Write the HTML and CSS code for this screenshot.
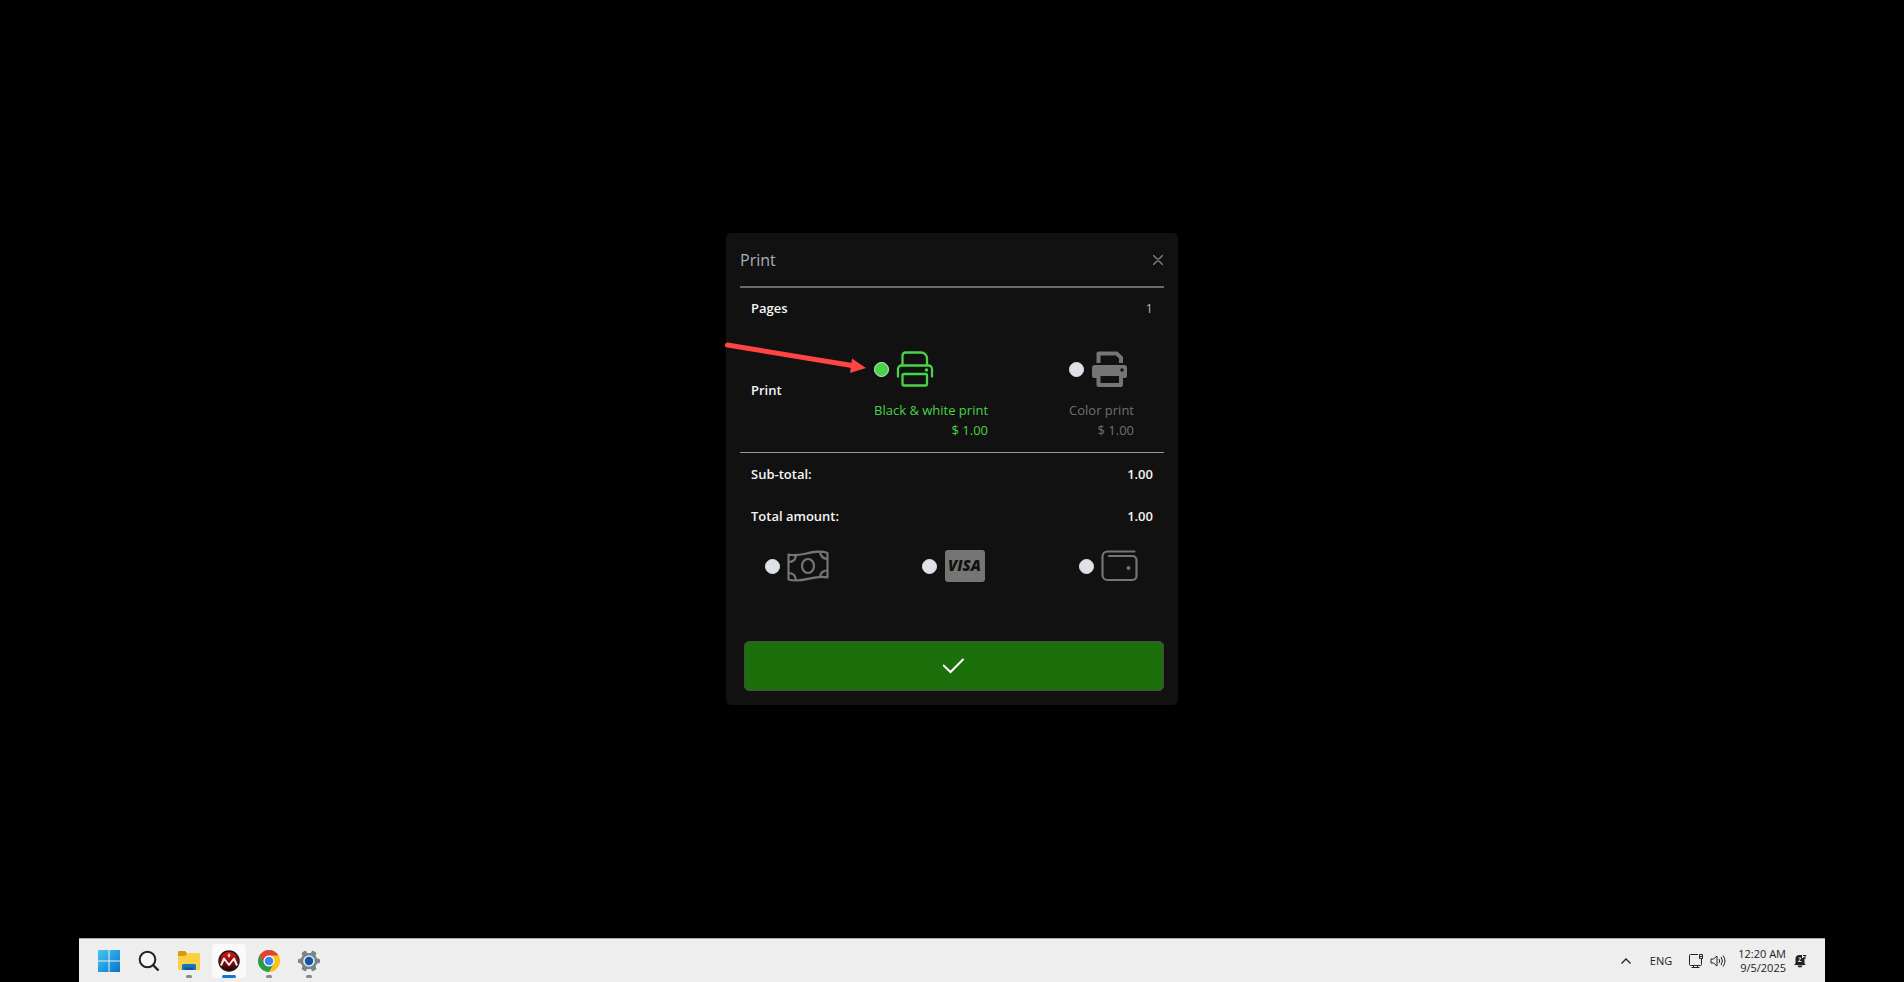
FILE: index.html
```html
<!DOCTYPE html>
<html lang="en">
<head>
    <meta charset="UTF-8">
    <meta name="viewport" content="width=device-width, initial-scale=1.0">
    <title>Print</title>
    <link rel="stylesheet" href="styles.css">
</head>
<body>
    <main class="desktop">
        <form class="dialog">
            <div class="dialog-header">
                <h1>Print</h1>
                <button type="button" class="close" aria-label="Close">
                    <svg width="10" height="10" viewBox="0 0 10 10" fill="none" stroke="currentColor" stroke-width="1.300"><path d="M0 0L3.500 3.500Q5 4.700 6.500 3.500L10 0M0 10L3.500 6.500Q5 5.300 6.500 6.500L10 10"/></svg>
                </button>
            </div>

            <div class="row pages-row">
                <span class="label">Pages</span>
                <span class="muted">1</span>
            </div>
            <div class="row print-row">
                <span class="label">Print</span>
                <div class="print-options">
                    <label class="print-option selected">
                        <span class="choice">
                            <input type="radio" name="mode" value="bw" checked>
                            <svg width="38" height="38" viewBox="0 0 38 38" fill="none" stroke="currentColor" stroke-width="2.300" stroke-linecap="round" stroke-linejoin="round">
                                <path d="M6.500 15V5.500a3 3 0 0 1 3-3h15.500a6 6 0 0 1 6 6V15"/>
                                <path d="M2 26.500V19a3.500 3.500 0 0 1 3.500-3.500h27a3.500 3.500 0 0 1 3.500 3.500v7.500"/>
                                <rect x="6.500" y="24" width="24.500" height="11.500" rx="1.500"/>
                                <circle cx="30.500" cy="20" r="1.800" fill="currentColor" stroke="none"/>
                            </svg>
                        </span>
                        <span>Black &amp; white print</span>
                        <span>$ 1.00</span>
                    </label>
                    <label class="print-option">
                        <span class="choice">
                            <input type="radio" name="mode" value="color">
                            <svg width="38" height="38" viewBox="0 0 38 38" fill="currentColor">
                                <path d="M5.500 13V3.500a2 2 0 0 1 2-2h19L32 7v6h-4V8.500L25 5.500H9.500V13z"/>
                                <path fill-rule="evenodd" d="M4 15h29a3 3 0 0 1 3 3v8a2 2 0 0 1-2 2h-2v7a2 2 0 0 1-2 2H7.500a2 2 0 0 1-2-2v-7H3a2 2 0 0 1-2-2v-8a3 3 0 0 1 3-3zM9.500 26v7H28v-7zM31 18.300a1.700 1.700 0 1 0 0 3.400 1.700 1.700 0 0 0 0-3.400z"/>
                            </svg>
                        </span>
                        <span>Color print</span>
                        <span>$ 1.00</span>
                    </label>
                </div>
            </div>

            <div class="row">
                <span class="label">Sub-total:</span>
                <span class="label">1.00</span>
            </div>
            <div class="row">
                <span class="label">Total amount:</span>
                <span class="label">1.00</span>
            </div>

            <div class="payments">
                <label class="choice">
                    <input type="radio" name="payment" value="cash" aria-label="Cash">
                    <svg width="42" height="32" viewBox="0 0 42 32" fill="none" stroke="currentColor" stroke-width="2.200" stroke-linejoin="round">
                        <path d="M1.500 4.500C14 8 27-2 40.500 3v24.500C28 24 15 34 1.500 29.500z"/>
                        <ellipse cx="21" cy="16" rx="6" ry="7"/>
                        <path d="M9 5.500c-.500 4-3 6.500-7.500 6.500M33 2c.500 4 3 6.500 7.500 7M1.500 23c4 0 7 2.500 7.500 7M33 27c.500-4 3-6.500 7.500-6.500"/>
                    </svg>
                </label>
                <label class="choice">
                    <input type="radio" name="payment" value="visa" aria-label="Visa">
                    <svg width="42" height="32" viewBox="0 0 42 32">
                        <rect x="1" y="0" width="40" height="32" rx="3" fill="currentColor"/>
                        <text class="visa" x="20.500" y="21" text-anchor="middle">VISA</text>
                    </svg>
                </label>
                <label class="choice">
                    <input type="radio" name="payment" value="wallet" aria-label="Wallet">
                    <svg width="42" height="32" viewBox="0 0 42 32" fill="none" stroke="currentColor" stroke-width="2.200" stroke-linecap="round">
                        <path d="M33.500 1.500H6.500a5 5 0 0 0-5 5V25a5 5 0 0 0 5 5h25a4 4 0 0 0 4-4V10a4 4 0 0 0-4-4H8"/>
                        <circle cx="27.500" cy="18" r="2" fill="currentColor" stroke="none"/>
                    </svg>
                </label>
            </div>

            <button type="submit" class="confirm" aria-label="Confirm">
                <svg width="22" height="16" viewBox="0 0 22 16" fill="none" stroke="currentColor" stroke-width="2"><path d="M0 7l7.500 7L20.500 1"/></svg>
            </button>

            <svg class="arrow" width="142" height="36" viewBox="0 0 142 36">
                <path d="M2.500 8L127 28.500" stroke="#ff4444" stroke-width="5" stroke-linecap="round"/>
                <path d="M127 21.500L141 31L125 36z" fill="#ff4444"/>
            </svg>
        </form>
    </main>

    <footer class="taskbar">
        <nav class="apps">
            <button class="app" aria-label="Start">
                <svg width="22" height="22" viewBox="0 0 22 22">
                    <defs><linearGradient id="win" x1="0" y1="0" x2="1" y2="1"><stop offset="0" stop-color="#45c8f5"/><stop offset="1" stop-color="#0673c9"/></linearGradient></defs>
                    <path fill="url(#win)" d="M0 0h10.500v10.500H0zM11.500 0H22v10.500H11.500zM0 11.500h10.500V22H0zM11.500 11.500H22V22H11.500z"/>
                </svg>
            </button>
            <button class="app" aria-label="Search">
                <svg width="22" height="22" viewBox="0 0 22 22" fill="none" stroke="#222" stroke-width="2"><circle cx="9.500" cy="9.500" r="7.800" fill="#f6f6f6"/><path d="M15 15l5.500 5.500" stroke-width="2.400"/></svg>
            </button>
            <button class="app open" aria-label="File Explorer">
                <svg width="22" height="22" viewBox="0 0 22 22">
                    <path fill="#d79a13" d="M0 2a1 1 0 0 1 1-1h6l2 2v4H0z"/>
                    <path fill="#fbd044" d="M0 6h7l3-3h11a1 1 0 0 1 1 1v15a1 1 0 0 1-1 1H1a1 1 0 0 1-1-1z"/>
                    <path fill="#1674c5" d="M4 20v-4.500A1.500 1.500 0 0 1 5.500 14h11a1.500 1.500 0 0 1 1.500 1.500V20z"/>
                    <path fill="#0d559d" d="M6.500 17.500h9V20h-9z"/>
                </svg>
            </button>
            <button class="app open active" aria-label="Print client">
                <svg width="22" height="22" viewBox="0 0 22 22">
                    <defs><linearGradient id="red" x1="0" y1="0" x2="0" y2="1"><stop offset="0" stop-color="#e01818"/><stop offset=".6" stop-color="#7e0808"/><stop offset="1" stop-color="#180808"/></linearGradient></defs>
                    <circle cx="11" cy="11" r="10" fill="url(#red)" stroke="#291414" stroke-width="1.500"/>
                    <path fill="none" stroke="#eee" stroke-width="2" stroke-linejoin="round" d="M3 15.500L6 8.500l5 6.500 5-6.500 3 7"/>
                    <path fill="#ddd" d="M11 3l1.500 2.500L11 8 9.500 5.500z"/>
                </svg>
            </button>
            <button class="app open" aria-label="Chrome">
                <svg width="22" height="22" viewBox="0 0 22 22">
                    <circle cx="11" cy="11" r="11" fill="#fbc116"/>
                    <path fill="#db4437" d="M1.500 5.500a11 11 0 0 1 19 0H11L6.200 13.700z"/>
                    <path fill="#249b50" d="M1.500 5.500L6.300 13.700 15.700 13.700 11 22A11 11 0 0 1 1.500 5.500z"/>
                    <circle cx="11" cy="11" r="5.500" fill="#fff"/>
                    <circle cx="11" cy="11" r="4.300" fill="#3f82ee"/>
                </svg>
            </button>
            <button class="app open" aria-label="Settings">
                <svg width="22" height="22" viewBox="0 0 22 22">
                    <path fill="#7a828b" stroke="#7a828b" stroke-linejoin="round" d="M7.500 1L8.800 3.500h4.400L14.500 1l3.500 2-1 2.800 2 3.200 2.500.500v3L19 13l-2 3.200 1 2.800-3.500 2-1.300-2.500H8.800L7.500 21 4 19l1-2.800L3 13l-2.500-.500v-3L3 9l2-3.200L4 3z"/>
                    <circle cx="11" cy="11" r="5.800" fill="#e3e8ec"/>
                    <circle cx="11" cy="11" r="4.200" fill="#0d59a5"/>
                </svg>
            </button>
        </nav>

        <div class="tray">
            <button class="tray-button chevron" aria-label="Show hidden icons">
                <svg width="10" height="6" viewBox="0 0 10 6" fill="none" stroke="#222" stroke-width="1.300"><path d="M.500 5.500L5 1l4.500 4.500"/></svg>
            </button>
            <button class="tray-button language">ENG</button>
            <button class="tray-button status" aria-label="Network and volume">
                <svg width="16" height="16" viewBox="0 0 16 16" fill="none" stroke="#222"><path d="M10 1.500H2.500a1 1 0 0 0-1 1v9a1 1 0 0 0 1 1h10a1 1 0 0 0 1-1V6M5.500 12.500v2M9.500 12.500v2M3.500 14.500h8M11.500 1.500h3v4h-3zM12 3.500h2"/></svg>
                <svg width="16" height="14" viewBox="0 0 16 14" fill="none" stroke="#222" stroke-linejoin="round"><path d="M1 5h2.500L7 2v10L3.500 9H1zM9 5q1.500 2 0 4M11 3q3 4 0 8M13 1.500q4 5.500 0 11"/></svg>
            </button>
            <button class="tray-button clock">
                <span>12:20 AM</span>
                <span>9/5/2025</span>
            </button>
            <button class="tray-button" aria-label="Notifications">
                <svg width="13" height="14" viewBox="0 0 13 14"><path fill="#222" d="M1.500 9.500V5a4 4 0 0 1 4-4H8v3h2.500v5.500l1.500 1.500H0zM3.500 11.500h5a2.500 2 0 0 1-5 0z"/><path fill="none" stroke="#eee" stroke-width=".900" d="M4.500 4h2.500L4.500 7.500h3"/><path fill="none" stroke="#222" d="M9 1.500h3L9.500 4H12"/></svg>
            </button>
        </div>
    </footer>
</body>
</html>
```
FILE: styles.css
```css
* {
    box-sizing: border-box;
}
body {
    margin: 0;
    min-height: 100vh;
    display: flex;
    flex-direction: column;
    background-color: #000;
    color: #f5f5f5;
    font-family: "Open Sans", "Noto Sans", sans-serif;
    font-size: 13px;
    line-height: 20px;
}
button {
    padding: 0;
    border: none;
    background: none;
    color: inherit;
    font: inherit;
    cursor: pointer;
}
svg {
    display: block;
    flex: none;
}
.desktop {
    flex: 1;
    display: flex;
    justify-content: center;
    align-items: center;
}

/* print dialog */
.dialog {
    position: relative;
    width: 452px;
    max-width: 100%;
    padding: 0 14px 14px;
    border-radius: 5px;
    background-color: #111;
}
.dialog-header {
    display: flex;
    justify-content: space-between;
    align-items: center;
    height: 55px;
    border-bottom: 2px solid #6a6a6a;
}
.dialog-header h1 {
    margin: 0;
    color: #a9afb6;
    font-size: 16px;
    font-weight: 400;
}
.close {
    padding: 4px 1px;
    color: #848484;
}
.row {
    display: flex;
    justify-content: space-between;
    align-items: center;
    min-height: 42px;
    padding: 0 11px;
}
.pages-row {
    min-height: 40px;
}
.label {
    font-weight: 600;
}
.muted {
    color: #adb2b8;
}
.print-row {
    min-height: 125px;
    padding-right: 30px;
    border-bottom: 1px solid #9a9a9a;
}
.print-options {
    display: flex;
    gap: 81px;
    padding-top: 10px;
}
.print-option {
    display: flex;
    flex-direction: column;
    align-items: flex-end;
    color: #707070;
}
.print-option .choice {
    align-self: flex-start;
    align-items: flex-start;
    height: 50px;
}
.print-option .choice input {
    margin-top: 12px;
}
.choice {
    display: flex;
    align-items: center;
    gap: 7px;
    color: #757575;
}
.print-option.selected,
.print-option.selected .choice {
    color: #49d349;
}
.choice input {
    appearance: none;
    flex: none;
    width: 15px;
    height: 15px;
    margin: 0;
    border: 1px solid #dee2e6;
    border-radius: 50%;
    background-color: #dee2e6;
}
.choice input:checked {
    background-color: #49d349;
}
.payments {
    display: flex;
    justify-content: space-between;
    padding: 13px 21px 59px 25px;
}
.visa {
    fill: #111;
    font: italic 800 15px "Open Sans", sans-serif;
}
.confirm {
    display: flex;
    justify-content: center;
    align-items: center;
    width: calc(100% - 4px);
    height: 50px;
    margin-left: 4px;
    border: 1px solid #484848;
    border-radius: 5px;
    background-color: #1b700c;
    color: #fff;
}
.confirm:hover {
    background-color: #21830f;
}
.arrow {
    position: absolute;
    left: -1px;
    top: 104px;
    pointer-events: none;
}

/* taskbar */
.taskbar {
    display: flex;
    justify-content: space-between;
    height: 44px;
    margin: 0 79px;
    padding: 0 18px 0 13px;
    border-top: 1px solid #a9a9a9;
    background-color: #eee;
    color: #222;
}
.apps {
    display: flex;
    align-items: center;
    gap: 6px;
}
.app {
    position: relative;
    display: flex;
    justify-content: center;
    align-items: center;
    width: 34px;
    height: 34px;
    border-radius: 4px;
}
.app.open::after {
    content: "";
    position: absolute;
    bottom: 0;
    width: 6px;
    height: 3px;
    border-radius: 2px;
    background-color: #888;
}
.app.active {
    background-color: #fafafa;
}
.app.active::after {
    width: 14px;
    background-color: #0d77d5;
}
.tray {
    display: flex;
    align-items: center;
    font-size: 11px;
    line-height: 14px;
}
.chevron {
    margin-right: 19px;
}
.language {
    margin-right: 16px;
}
.status {
    display: flex;
    align-items: center;
    gap: 6px;
    margin-right: 12px;
}
.clock {
    display: flex;
    flex-direction: column;
    align-items: flex-end;
    margin-right: 8px;
}
```
